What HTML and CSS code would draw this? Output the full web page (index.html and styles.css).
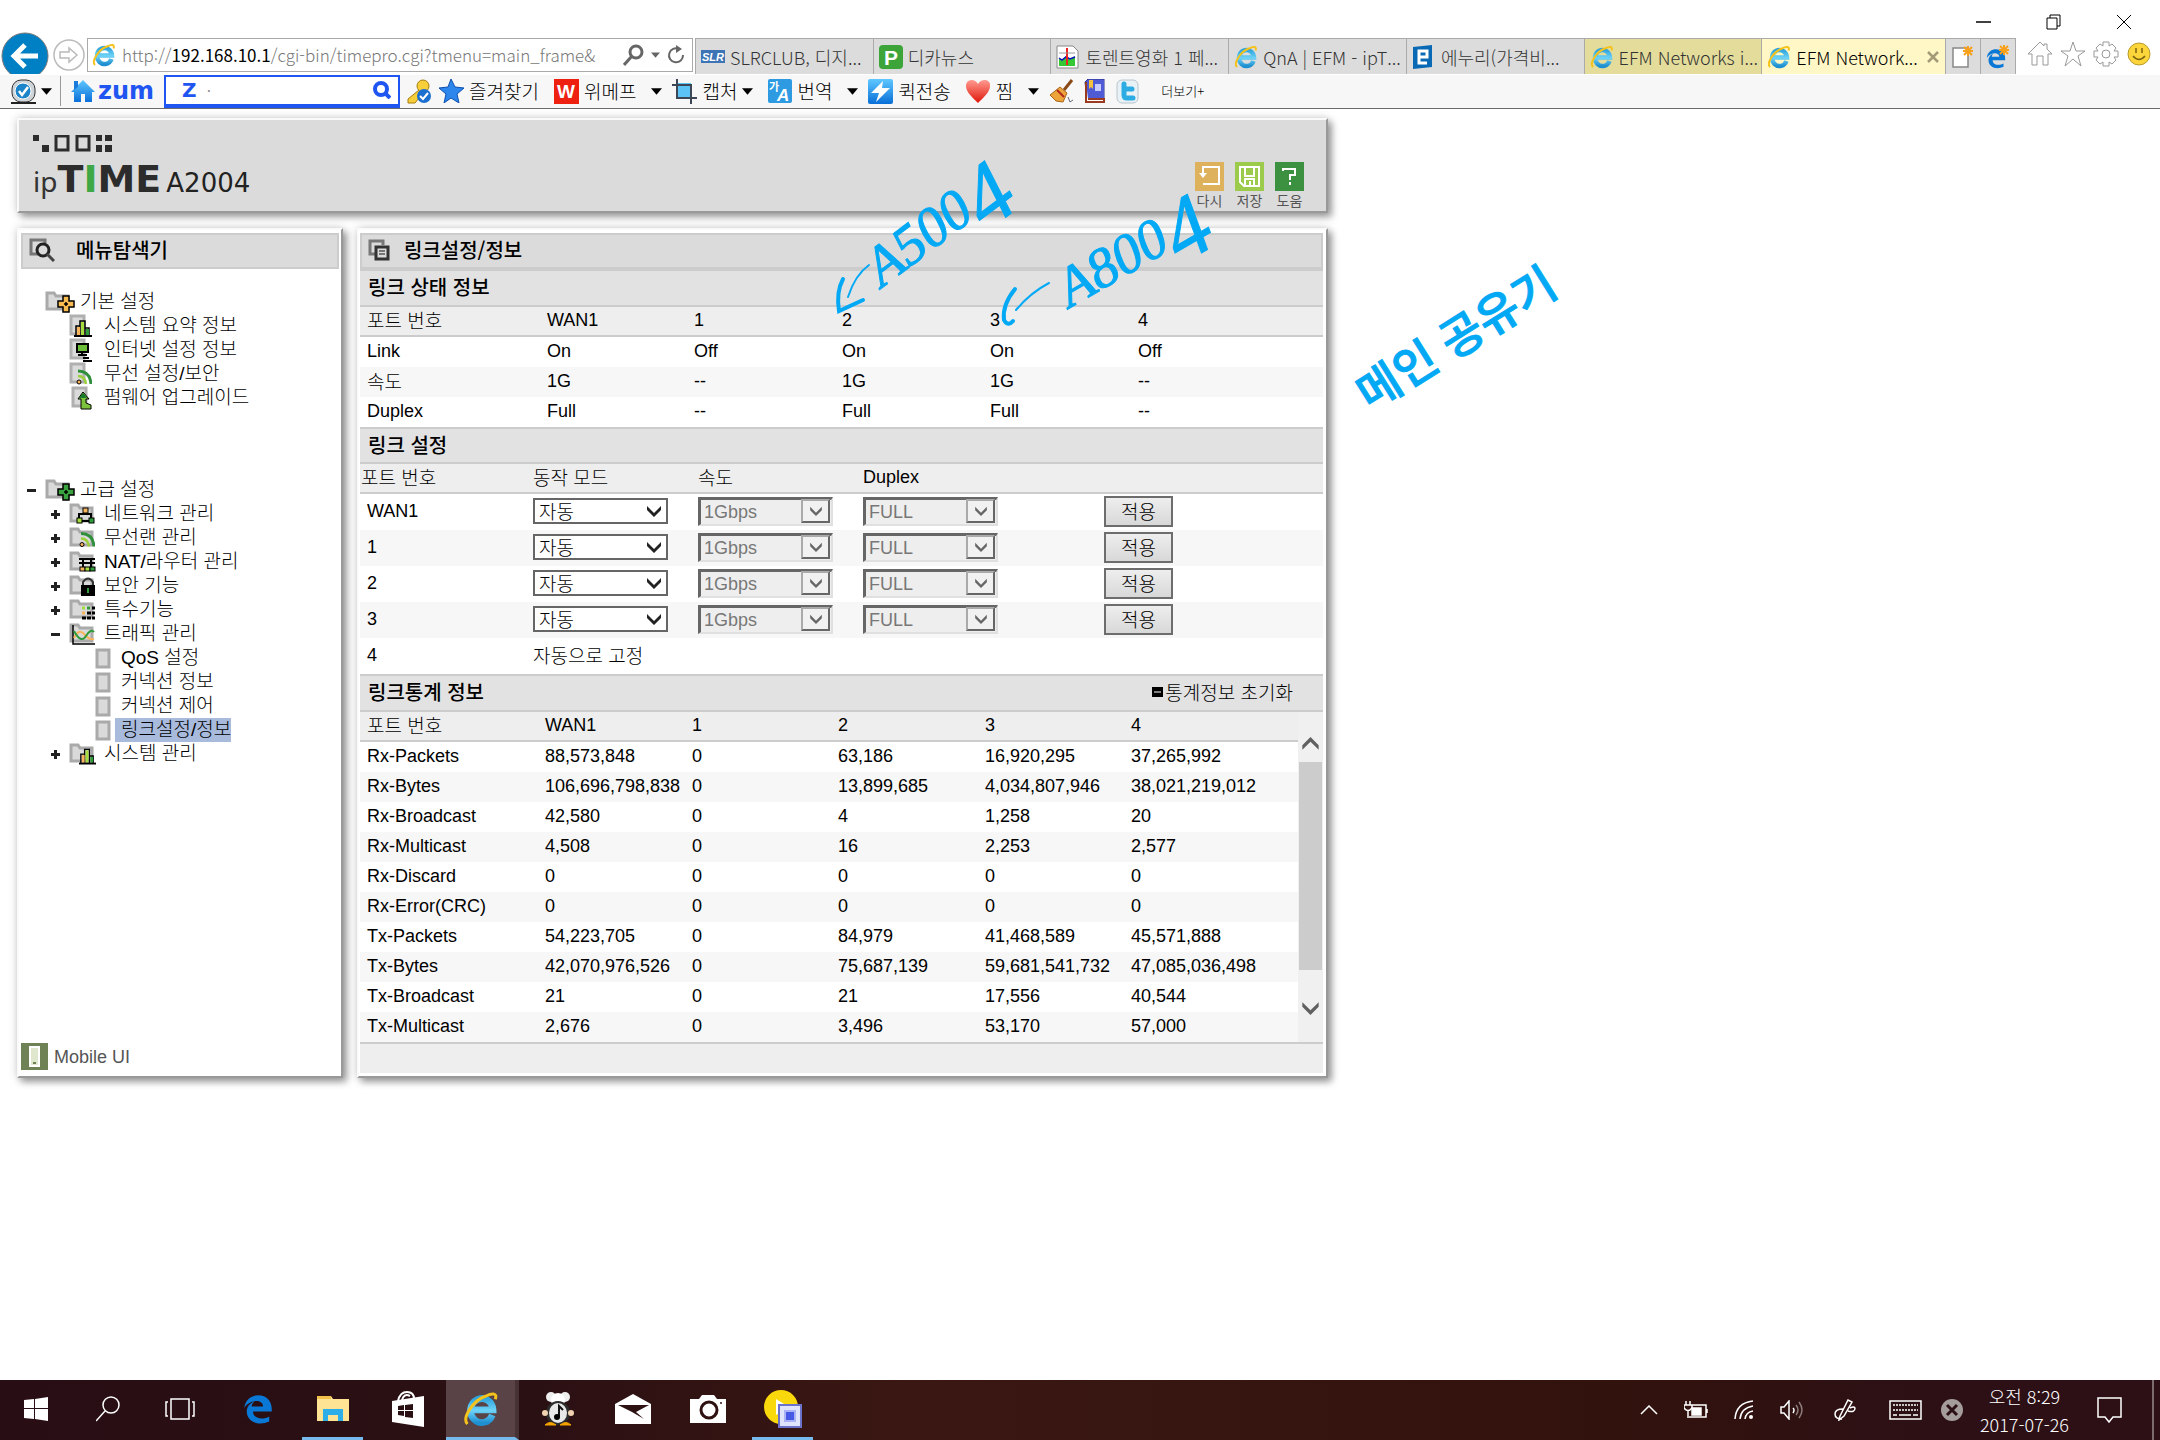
FILE: index.html
```html
<!DOCTYPE html>
<html lang="ko">
<head>
<meta charset="utf-8">
<title>EFM Networks ipTIME A2004</title>
<link rel="stylesheet" href="styles.css">
</head>
<body>
<svg class="defs" width="0" height="0" aria-hidden="true">
  <defs>
    <linearGradient id="g-ie" x1="0" y1="0" x2="0" y2="1"><stop offset="0" stop-color="#2fa4dd"/><stop offset=".5" stop-color="#6fd3f7"/><stop offset="1" stop-color="#1e8fd0"/></linearGradient>
    <linearGradient id="g-blue" x1="0" y1="0" x2="0" y2="1"><stop offset="0" stop-color="#5fc8ff"/><stop offset="1" stop-color="#0a6fd8"/></linearGradient>
    <linearGradient id="g-red" x1="0" y1="0" x2="0" y2="1"><stop offset="0" stop-color="#ff9a90"/><stop offset="1" stop-color="#e01508"/></linearGradient>
    <symbol id="ie" viewBox="0 0 24 24"><path d="M19.500 16A7.500 8 0 1 1 20 12.500H6.500" fill="none" stroke="url(#g-ie)" stroke-width="4.500"/><path d="M3 22C-1 18 7 6 15 3.500C20 1 23 1.500 21.500 5.500" fill="none" stroke="#f5c21b" stroke-width="2"/></symbol>
    <symbol id="edge" viewBox="0 0 24 24"><path d="M1 11C2 4 7 1 12 1C19 1 23 6 23 12V14H8C8 20 16 21 21 18V22C12 26 3 22 3 14C3 10 6 7 9 6C7 8 7 9 7 10H16C16 4 6 4 1 11Z" fill="#0a78d6"/></symbol>
    <symbol id="caret" viewBox="0 0 12 7"><path d="M0 0H12L6 7Z"/></symbol>
    <symbol id="chev" viewBox="0 0 16 12"><path d="M1 1L8 8L15 1V5L8 12L1 5Z"/></symbol>
    <symbol id="plus" viewBox="0 0 9 9"><path d="M0 3H3V0H6V3H9V6H6V9H3V6H0Z" fill="#222"/></symbol>
    <symbol id="minus" viewBox="0 0 9 9"><path d="M0 3H9V6H0Z" fill="#222"/></symbol>
    <symbol id="folder" viewBox="0 0 28 22"><path d="M2 18V2H9L11 5H23V18Z" fill="#dadada" stroke="#aaa" stroke-width="3"/></symbol>
    <symbol id="sheet" viewBox="0 0 22 22"><path d="M2 2H15V20H2Z" fill="#dadada" stroke="#b0b0b0" stroke-width="3"/></symbol>
    <symbol id="leaf" viewBox="0 0 16 21"><path d="M2 2H14V19H2Z" fill="#dadada" stroke="#aaa" stroke-width="3"/></symbol>
    <symbol id="bars" viewBox="0 0 18 18"><path d="M2 17V7H6V17M6 17V2H11V17M11 17V9H15V17" stroke="#000" stroke-width="1.500" fill="none"/><path d="M3 8H6V16H3Z" fill="#f9b55e"/><path d="M7 3H10V16H7Z" fill="#a5dc3e"/><path d="M12 10H15V16H12Z" fill="#2f9b3b"/><path d="M0 17H18" stroke="#000" stroke-width="2"/></symbol>
    <symbol id="waves" viewBox="0 0 16 16"><path d="M2 2Q14 2 15 15" stroke="#2f8f3b" stroke-width="3" fill="none"/><path d="M2 7Q9 7 10 15" stroke="#9dd13c" stroke-width="2.500" fill="none"/><circle cx="3" cy="13" r="2" fill="#f9b55e" stroke="#000"/></symbol>
    <symbol id="cross" viewBox="0 0 18 18"><path d="M6 1H12V6H17V12H12V17H6V12H1V6H6Z" stroke="#000" stroke-width="1.500"/><path d="M9 7V11M7 9H11" stroke="#000" stroke-width="1.500"/></symbol>
  </defs>
</svg>

<header class="chrome">
  <div class="window-bar">
    <button aria-label="최소화"><svg width="16" height="16"><path d="M0 8H15" stroke="#000" stroke-width="1.500"/></svg></button>
    <button aria-label="복원"><svg width="16" height="16" fill="none" stroke="#000"><path d="M1 4H11V15H1ZM4 4V1H14V12H11"/></svg></button>
    <button aria-label="닫기"><svg width="16" height="16" stroke="#000"><path d="M1 1L15 15M15 1L1 15"/></svg></button>
  </div>

  <div class="nav-bar">
    <button class="back" aria-label="뒤로"><svg width="48" height="42" viewBox="0 0 48 42"><circle cx="24" cy="24" r="23" fill="#0080c4" stroke="#777"/><path d="M37 24H14M24 13L13 24L24 35" fill="none" stroke="#fff" stroke-width="5"/></svg></button>
    <button class="forward" aria-label="앞으로"><svg width="34" height="34" viewBox="0 0 34 34" fill="none" stroke="#bbb" stroke-width="1.500"><circle cx="17" cy="17" r="15"/><path d="M8 14H17V10L25 17L17 24V20H8Z"/></svg></button>
    <div class="address">
      <svg width="24" height="24"><use href="#ie"/></svg>
      <a class="url" href="#">http://<b>192.168.10.1</b>/cgi-bin/timepro.cgi?tmenu=main_frame&amp;</a>
      <svg width="22" height="22" fill="none" stroke="#666" stroke-width="3"><circle cx="13" cy="8" r="6"/><path d="M9 12L1 21"/></svg>
      <svg width="9" height="6" fill="#666"><use href="#caret"/></svg>
      <svg width="20" height="20" fill="none" stroke="#666" stroke-width="2"><path d="M13 4A7 7 0 1 0 17 10"/><path d="M10 0L16 4L10 8Z" fill="#666" stroke="none"/></svg>
    </div>
    <nav class="tabs">
      <a class="tab" href="#"><svg width="24" height="24"><rect y="5" width="24" height="13" fill="#3d74b5"/><text x="1" y="16" class="ico slr">SLR</text></svg><span>SLRCLUB, 디지...</span></a>
      <a class="tab" href="#"><svg width="24" height="24"><rect width="24" height="24" rx="4" fill="#3da43a"/><text x="5" y="20" class="ico p">P</text></svg><span>디카뉴스</span></a>
      <a class="tab" href="#"><svg width="24" height="24"><path d="M1 1H17L22 6V23H1Z" fill="#fff" stroke="#888"/><path d="M3 21V13L6 15L10 11L14 14L19 11V21Z" fill="#34c934"/><path d="M3 13L6 15L10 12L14 14L19 12" stroke="#11b" stroke-width="1.500" fill="none"/><path d="M11 3V20" stroke="#e22" stroke-width="2"/><path d="M3 8H19" stroke="#999"/></svg><span>토렌트영화 1 페...</span></a>
      <a class="tab" href="#"><svg width="24" height="24"><use href="#ie"/></svg><span>QnA | EFM - ipT...</span></a>
      <a class="tab" href="#"><svg width="24" height="24"><path d="M1 2L20 0V22L1 24Z" fill="#0a69b4"/><path d="M7 12H15V6H7V18H15" fill="none" stroke="#fff" stroke-width="3"/></svg><span>에누리(가격비...</span></a>
      <a class="tab olive" href="#"><svg width="24" height="24"><use href="#ie"/></svg><span>EFM Networks i...</span></a>
      <a class="tab current" href="#"><svg width="24" height="24"><use href="#ie"/></svg><span>EFM Network...</span><svg class="x" width="12" height="12"><path d="M1 1L11 11M11 1L1 11" stroke="#a39b78" stroke-width="2.500"/></svg></a>
      <button class="tab mini" aria-label="새 탭"><svg width="22" height="24"><path d="M1 3H16V22H1Z" fill="#fff" stroke="#888" stroke-width="1.500"/><path d="M16 1V11M11 6H21M12 2L20 10M20 2L12 10" stroke="#f7a01b" stroke-width="2"/></svg></button>
      <button class="tab mini" aria-label="Edge로 열기"><svg width="24" height="24"><svg y="3" width="20" height="21"><use href="#edge"/></svg><path d="M18 0V10M13 5H23M14 1L22 9M22 1L14 9" stroke="#f7a01b" stroke-width="2"/></svg></button>
    </nav>
    <div class="tools">
      <button aria-label="홈"><svg width="26" height="26"><path d="M1 13L13 1L17 5V3H20V8L25 13H21V24H16V15H10V24H5V13Z"/></svg></button>
      <button aria-label="즐겨찾기"><svg width="26" height="26"><path d="M13 1L16 10H25L18 15L21 25L13 18L5 25L8 15L1 10H10Z"/></svg></button>
      <button aria-label="도구"><svg width="26" height="26"><circle cx="13" cy="13" r="4"/><path d="M10 1H16V5L19 3L23 7L21 10H25V16H21L23 19L19 23L16 21V25H10V21L7 23L3 19L5 16H1V10H5L3 7L7 3L10 5Z"/></svg></button>
      <button aria-label="의견"><svg width="26" height="26"><circle class="face" cx="13" cy="13" r="11"/><path d="M10 7V12M16 7V12M7 15Q13 22 19 15" stroke="#7b6210" stroke-width="1.500"/></svg></button>
    </div>
  </div>

  <div class="toolbar">
    <button aria-label="알툴바"><svg width="25" height="25"><rect x="1" y="1" width="23" height="22" rx="9" fill="#cfd4d8" stroke="#333"/><path d="M0 24H25" stroke="#222" stroke-width="2"/><circle cx="12" cy="12" r="8" fill="#1c84c9" stroke="#fff"/><path d="M8 12L11 16L17 8" fill="none" stroke="#fff" stroke-width="2.500"/></svg><svg width="11" height="7"><use href="#caret"/></svg></button>
    <a class="zum" href="#"><svg width="24" height="24"><path d="M0 13L12 1L24 13H21V23H14V15H10V23H3V13Z" fill="url(#g-blue)"/><path d="M3 2H7V8L3 11Z" fill="#1a7cd8"/></svg><b>zum</b></a>
    <label class="search"><b>Z</b><input type="text" aria-label="검색" value="·"><svg width="18" height="18" fill="none" stroke="#1f55f0" stroke-width="4"><circle cx="8" cy="8" r="6"/><path d="M12 12L17 17"/></svg></label>
    <button class="close" aria-label="비밀번호"><svg width="25" height="25"><circle cx="16" cy="7" r="6" fill="#f6cf3b" stroke="#a67c0c"/><path d="M12 11L1 20V24H8L16 14" fill="#f6cf3b" stroke="#a67c0c"/><circle cx="17" cy="17" r="7" fill="#1b6fd0"/><path d="M13 17L16 20L21 14" fill="none" stroke="#fff" stroke-width="2"/></svg></button>
    <button class="wide"><svg width="25" height="24"><path d="M12 0L16 8L25 9L18 15L20 24L12 19L5 24L7 15L0 9L9 8Z" fill="#2d86ec" stroke="#0c4fae"/></svg><span>즐겨찾기</span></button>
    <button class="wide"><svg width="25" height="25"><rect width="25" height="25" fill="#ee2010"/><text x="3" y="19" class="ico w">W</text></svg><span>위메프</span></button>
    <button aria-label="위메프 메뉴"><svg width="11" height="7"><use href="#caret"/></svg></button>
    <button class="wide"><svg width="25" height="25"><rect x="4" y="4" width="15" height="15" fill="#5bc3f5"/><path d="M5 0V19H25M0 6H19V25" fill="none" stroke="#3c4654" stroke-width="2"/></svg><span>캡처</span><svg width="11" height="7"><use href="#caret"/></svg></button>
    <button class="wide"><svg width="24" height="25"><rect width="24" height="24" rx="2" fill="#2e9ae2"/><text x="1" y="12" class="ico ga">가</text><text x="9" y="22" class="ico a">A</text></svg><span>번역</span></button>
    <button aria-label="번역 메뉴"><svg width="11" height="7"><use href="#caret"/></svg></button>
    <button class="wide"><svg width="25" height="25"><rect width="25" height="25" rx="2" fill="url(#g-blue)"/><path d="M15 2L3 14H11L8 23L22 9H14Z" fill="#fff"/></svg><span>퀵전송</span></button>
    <button class="wide"><svg width="25" height="25"><path d="M12 24C6 18 0 13 0 7C0 0 9 -1 12 5C15 -1 25 0 24 7C24 13 18 18 12 24Z" fill="url(#g-red)"/></svg><span>찜</span></button>
    <button aria-label="찜 메뉴"><svg width="11" height="7"><use href="#caret"/></svg></button>
    <button aria-label="청소"><svg width="25" height="25"><path d="M23 1L15 11" stroke="#8a4a17" stroke-width="3"/><path d="M11 8L18 14L14 23L7 22L1 16Z" fill="#eda53b" stroke="#a8651a"/><path d="M8 11L15 18" stroke="#b3281c" stroke-width="2"/><path d="M19 18L21 23L24 21" stroke="#667" fill="none"/></svg></button>
    <button aria-label="사전"><svg width="22" height="25"><path d="M1 3L4 0H20V20H3Z" fill="#4f5bd5" stroke="#2b338f"/><path d="M2 3V23H20V20H4" fill="#fff" stroke="#9a3b20" stroke-width="2"/><path d="M4 1H20V19H4Z" fill="#4f5bd5"/><path d="M5 1V10L7 8L9 10V1Z" fill="#f4c23c"/><path d="M11 5H17V12H11Z" fill="#c6ccff"/></svg></button>
    <button aria-label="트위터"><svg width="23" height="25"><rect x="1" y="1" width="21" height="23" rx="5" fill="#e8f1f6" stroke="#b9c4cc"/><path d="M8 5V16Q8 19 11 19H17M8 10H16" fill="none" stroke="#2cace3" stroke-width="5" stroke-linecap="round"/></svg></button>
    <button class="more">더보기+</button>
  </div>
</header>

<main class="page">
  <div class="frame">
    <header class="panel masthead">
      <div class="brand">
        <svg width="80" height="17" fill="#2c2c2c"><path d="M0 0H6V6H0ZM9 10H16V17H9ZM63 0H69V6H63ZM72 0H79V6H72ZM63 10H69V17H63ZM72 10H79V17H72Z"/><path d="M23 1H35V15H23ZM44 1H56V15H44Z" fill="none" stroke="#2c2c2c" stroke-width="3"/></svg>
        <h1><span class="ip">ip</span><b>T<i>I</i>ME</b><span class="model">A2004</span></h1>
      </div>
      <div class="actions">
        <button><svg width="29" height="29" fill="none" stroke="#fff" stroke-width="2"><rect width="29" height="29" fill="#deb15c" stroke="none"/><path d="M8 14V5H24V22H8"/><path d="M4 11H12L8 16Z" fill="#fff" stroke="none"/></svg>다시</button>
        <button><svg width="29" height="29" fill="none" stroke="#fff" stroke-width="2"><rect width="29" height="29" fill="#9ccb4b" stroke="none"/><path d="M5 5H24V24H9L5 20ZM10 5V14H19V5M10 24V17H19V24M15 19V24"/></svg>저장</button>
        <button><svg width="29" height="29" fill="none" stroke="#fff" stroke-width="2"><rect width="29" height="29" fill="#3c9141" stroke="none"/><path d="M8 9V7H20V13H15V18M15 20V23"/></svg>도움</button>
      </div>
    </header>

    <aside class="panel sidebar">
      <h2 class="bar"><svg width="26" height="24" fill="none" stroke="#777" stroke-width="3"><path d="M9 16H2V2H16V5"/><circle cx="14" cy="12" r="6" stroke="#222"/><path d="M18 16L25 23" stroke="#444"/></svg>메뉴탐색기</h2>
      <ul class="tree">
        <li class="l1"><span></span><svg width="30" height="24"><svg y="1" width="28" height="22"><use href="#folder"/></svg><svg x="12" y="5" width="18" height="18" fill="#f9bc50"><use href="#cross"/></svg></svg><a href="#">기본 설정</a></li>
        <li class="l2"><span></span><svg width="27" height="24"><svg width="22" height="22"><use href="#sheet"/></svg><svg x="5" y="5" width="18" height="18"><use href="#bars"/></svg></svg><a href="#">시스템 요약 정보</a></li>
        <li class="l2"><span></span><svg width="27" height="24"><svg width="22" height="22"><use href="#sheet"/></svg><path d="M8 6H19V14H8Z" fill="#6cbd3a" stroke="#000" stroke-width="2"/><path d="M13 14V18M9 17H18M14 20H20M14 23H23" stroke="#000" stroke-width="2"/></svg><a href="#">인터넷 설정 정보</a></li>
        <li class="l2"><span></span><svg width="27" height="24"><svg width="22" height="22"><use href="#sheet"/></svg><svg x="7" y="7" width="16" height="16"><use href="#waves"/></svg></svg><a href="#">무선 설정/보안</a></li>
        <li class="l2"><span></span><svg width="27" height="24"><svg x="2" width="22" height="22"><use href="#sheet"/></svg><path d="M14 6L20 13H17V17L22 19V23H12V13H9Z" fill="#7cc23c" stroke="#000"/><path d="M14 7L18 12H10Z" fill="#187b2b"/></svg><a href="#">펌웨어 업그레이드</a></li>
      </ul>
      <ul class="tree advanced">
        <li class="l1"><svg width="9" height="9"><use href="#minus"/></svg><svg width="30" height="24"><svg y="1" width="28" height="22"><use href="#folder"/></svg><svg x="12" y="5" width="18" height="18" fill="#3aa23f"><use href="#cross"/></svg></svg><a href="#">고급 설정</a></li>
        <li class="l2"><svg width="9" height="9"><use href="#plus"/></svg><svg width="27" height="24"><svg y="1" width="28" height="22"><use href="#folder"/></svg><path d="M10 19V12H22V19M10 19H22" fill="none" stroke="#000" stroke-width="2"/><g stroke="#000"><rect x="14" y="6" width="5" height="5" fill="#f9b55e"/><rect x="8" y="16" width="5" height="5" fill="#a5dc3e"/><rect x="20" y="16" width="5" height="5" fill="#2f9b3b"/></g></svg><a href="#">네트워크 관리</a></li>
        <li class="l2"><svg width="9" height="9"><use href="#plus"/></svg><svg width="27" height="24"><svg y="1" width="28" height="22"><use href="#folder"/></svg><svg x="10" y="5" width="16" height="17"><use href="#waves"/></svg></svg><a href="#">무선랜 관리</a></li>
        <li class="l2"><svg width="9" height="9"><use href="#plus"/></svg><svg width="27" height="24"><svg y="1" width="28" height="22"><use href="#folder"/></svg><path d="M10 9H26M10 13H26M14 9V18M22 9V18" stroke="#000" stroke-width="2"/><g stroke="#000"><rect x="11" y="17" width="5" height="4" fill="#f9b55e"/><rect x="16" y="17" width="5" height="4" fill="#a5dc3e"/><rect x="21" y="17" width="5" height="4" fill="#2f9b3b"/></g></svg><a href="#">NAT/라우터 관리</a></li>
        <li class="l2"><svg width="9" height="9"><use href="#plus"/></svg><svg width="27" height="24"><svg y="1" width="28" height="22"><use href="#folder"/></svg><path d="M14 12V8Q19 1 24 8V12" fill="none" stroke="#333" stroke-width="2"/><rect x="12" y="11" width="14" height="11"/><path d="M19 14V19" stroke="#2f9b3b" stroke-width="2"/></svg><a href="#">보안 기능</a></li>
        <li class="l2"><svg width="9" height="9"><use href="#plus"/></svg><svg width="27" height="24"><svg y="1" width="28" height="22"><use href="#folder"/></svg><path d="M18 15H26M13 20H26" stroke="#000" stroke-width="3" stroke-dasharray="4 1"/><path d="M13 10H16" stroke="#a5dc3e" stroke-width="3"/><path d="M18 10H21" stroke="#2f9b3b" stroke-width="3"/><path d="M13 15H16" stroke="#f9b55e" stroke-width="3"/><path d="M23 10H26" stroke="#000" stroke-width="3"/></svg><a href="#">특수기능</a></li>
        <li class="l2"><svg width="9" height="9"><use href="#minus"/></svg><svg width="27" height="24"><svg y="1" width="28" height="22"><use href="#folder"/></svg><path d="M4 3V22H26" fill="none" stroke="#000" stroke-width="1.500"/><path d="M5 16Q10 6 15 12T25 17" fill="none" stroke="#f9b55e" stroke-width="2"/><path d="M5 9Q12 22 17 14T25 10" fill="none" stroke="#2f9b3b" stroke-width="2"/></svg><a href="#">트래픽 관리</a></li>
        <li class="l3"><span></span><svg width="16" height="21"><use href="#leaf"/></svg><a href="#">QoS 설정</a></li>
        <li class="l3"><span></span><svg width="16" height="21"><use href="#leaf"/></svg><a href="#">커넥션 정보</a></li>
        <li class="l3"><span></span><svg width="16" height="21"><use href="#leaf"/></svg><a href="#">커넥션 제어</a></li>
        <li class="l3"><span></span><svg width="16" height="21"><use href="#leaf"/></svg><a class="selected" href="#">링크설정/정보</a></li>
        <li class="l2"><svg width="9" height="9"><use href="#plus"/></svg><svg width="27" height="24"><svg y="1" width="28" height="22"><use href="#folder"/></svg><svg x="10" y="5" width="17" height="18"><use href="#bars"/></svg></svg><a href="#">시스템 관리</a></li>
      </ul>
      <a class="mobile" href="#"><svg width="27" height="27"><rect width="27" height="27" fill="#6f8256"/><path d="M9 4H18V23H9Z" fill="#dfe8cf" stroke="#fff" stroke-width="2"/><path d="M12 20H15" stroke="#6f8256" stroke-width="2"/></svg>Mobile UI</a>
    </aside>

    <section class="panel content">
      <h2 class="bar"><svg width="22" height="22" fill="none" stroke="#777" stroke-width="3"><path d="M7 15H2V2H15V6"/><path d="M8 8H20V20H8Z" stroke="#333"/><path d="M11 12H17M11 15H17" stroke="#555" stroke-width="1.500"/></svg>링크설정/정보</h2>

      <h3>링크 상태 정보</h3>
      <table class="status">
        <colgroup><col class="c187"><col class="c147"><col class="c148"><col class="c148"><col class="c148"><col></colgroup>
        <thead><tr><th class="ko">포트 번호</th><th>WAN1</th><th>1</th><th>2</th><th>3</th><th>4</th></tr></thead>
        <tbody>
          <tr><td>Link</td><td>On</td><td>Off</td><td>On</td><td>On</td><td>Off</td></tr>
          <tr><td class="ko">속도</td><td>1G</td><td>--</td><td>1G</td><td>1G</td><td>--</td></tr>
          <tr><td>Duplex</td><td>Full</td><td>--</td><td>Full</td><td>Full</td><td>--</td></tr>
        </tbody>
      </table>

      <h3>링크 설정</h3>
      <table class="setup">
        <colgroup><col class="c173"><col class="c165"><col class="c165"><col class="c241"><col></colgroup>
        <thead><tr><th class="ko">포트 번호</th><th class="ko">동작 모드</th><th class="ko">속도</th><th>Duplex</th><th></th></tr></thead>
        <tbody>
          <tr><td>WAN1</td>
            <td><span class="pick"><select aria-label="WAN1 동작 모드"><option>자동</option></select><svg width="16" height="12"><use href="#chev"/></svg></span></td>
            <td><span class="pick off"><select aria-label="WAN1 속도" disabled><option>1Gbps</option></select><i><svg width="14" height="10"><use href="#chev"/></svg></i></span></td>
            <td><span class="pick off"><select aria-label="WAN1 Duplex" disabled><option>FULL</option></select><i><svg width="14" height="10"><use href="#chev"/></svg></i></span></td>
            <td><button class="apply">적용</button></td></tr>
          <tr><td>1</td>
            <td><span class="pick"><select aria-label="1 동작 모드"><option>자동</option></select><svg width="16" height="12"><use href="#chev"/></svg></span></td>
            <td><span class="pick off"><select aria-label="1 속도" disabled><option>1Gbps</option></select><i><svg width="14" height="10"><use href="#chev"/></svg></i></span></td>
            <td><span class="pick off"><select aria-label="1 Duplex" disabled><option>FULL</option></select><i><svg width="14" height="10"><use href="#chev"/></svg></i></span></td>
            <td><button class="apply">적용</button></td></tr>
          <tr><td>2</td>
            <td><span class="pick"><select aria-label="2 동작 모드"><option>자동</option></select><svg width="16" height="12"><use href="#chev"/></svg></span></td>
            <td><span class="pick off"><select aria-label="2 속도" disabled><option>1Gbps</option></select><i><svg width="14" height="10"><use href="#chev"/></svg></i></span></td>
            <td><span class="pick off"><select aria-label="2 Duplex" disabled><option>FULL</option></select><i><svg width="14" height="10"><use href="#chev"/></svg></i></span></td>
            <td><button class="apply">적용</button></td></tr>
          <tr><td>3</td>
            <td><span class="pick"><select aria-label="3 동작 모드"><option>자동</option></select><svg width="16" height="12"><use href="#chev"/></svg></span></td>
            <td><span class="pick off"><select aria-label="3 속도" disabled><option>1Gbps</option></select><i><svg width="14" height="10"><use href="#chev"/></svg></i></span></td>
            <td><span class="pick off"><select aria-label="3 Duplex" disabled><option>FULL</option></select><i><svg width="14" height="10"><use href="#chev"/></svg></i></span></td>
            <td><button class="apply">적용</button></td></tr>
          <tr><td>4</td><td class="ko" colspan="4">자동으로 고정</td></tr>
        </tbody>
      </table>

      <h3>링크통계 정보 <a class="reset" href="#"><svg width="11" height="10"><rect width="11" height="10"/><path d="M2 5H9" stroke="#fff"/></svg>통계정보 초기화</a></h3>
      <div class="stats">
        <table>
          <colgroup><col class="c185"><col class="c147"><col class="c146"><col class="c147"><col class="c146"><col></colgroup>
          <thead><tr><th class="ko">포트 번호</th><th>WAN1</th><th>1</th><th>2</th><th>3</th><th>4</th></tr></thead>
          <tbody>
            <tr><td>Rx-Packets</td><td>88,573,848</td><td>0</td><td>63,186</td><td>16,920,295</td><td>37,265,992</td></tr>
            <tr><td>Rx-Bytes</td><td>106,696,798,838</td><td>0</td><td>13,899,685</td><td>4,034,807,946</td><td>38,021,219,012</td></tr>
            <tr><td>Rx-Broadcast</td><td>42,580</td><td>0</td><td>4</td><td>1,258</td><td>20</td></tr>
            <tr><td>Rx-Multicast</td><td>4,508</td><td>0</td><td>16</td><td>2,253</td><td>2,577</td></tr>
            <tr><td>Rx-Discard</td><td>0</td><td>0</td><td>0</td><td>0</td><td>0</td></tr>
            <tr><td>Rx-Error(CRC)</td><td>0</td><td>0</td><td>0</td><td>0</td><td>0</td></tr>
            <tr><td>Tx-Packets</td><td>54,223,705</td><td>0</td><td>84,979</td><td>41,468,589</td><td>45,571,888</td></tr>
            <tr><td>Tx-Bytes</td><td>42,070,976,526</td><td>0</td><td>75,687,139</td><td>59,681,541,732</td><td>47,085,036,498</td></tr>
            <tr><td>Tx-Broadcast</td><td>21</td><td>0</td><td>21</td><td>17,556</td><td>40,544</td></tr>
            <tr><td>Tx-Multicast</td><td>2,676</td><td>0</td><td>3,496</td><td>53,170</td><td>57,000</td></tr>
          </tbody>
        </table>
        <div class="scroll">
          <button class="up" aria-label="위로"><svg width="19" height="14"><use href="#chev"/></svg></button>
          <div class="thumb"></div>
          <button aria-label="아래로"><svg width="19" height="14"><use href="#chev"/></svg></button>
        </div>
      </div>
      <footer class="foot"></footer>
    </section>
  </div>
</main>

<!-- pen notes written over the window -->
<svg class="ink" width="1600" height="440" viewBox="0 0 1600 440">
  <g fill="none" stroke="#03a9f4" stroke-linecap="round">
    <path d="M843 279Q836 292 839 311L863 300" stroke-width="4"/><path d="M869 265Q855 275 848 297" stroke-width="2"/>
    <path d="M1015 289Q1002 305 1004 320Q1008 327 1013 321" stroke-width="4"/><path d="M1049 283Q1030 293 1016 310" stroke-width="2"/>
  </g>
  <text class="note" transform="translate(882 288) rotate(-37)">A500<tspan class="tall" dy="18">4</tspan></text>
  <text class="note" transform="translate(1070 308) rotate(-30)">A800<tspan class="tall" dy="18">4</tspan></text>
  <text class="note hangul" transform="translate(1370 412) rotate(-32)">메인 공유기</text>
</svg>

<footer class="taskbar">
  <div class="apps">
    <button class="sys" aria-label="시작"><svg width="24" height="24" fill="#fff"><path d="M0 3L10 2V11H0ZM11 2L24 0V11H11ZM0 12H10V22L0 21ZM11 12H24V24L11 22Z"/></svg></button>
    <button class="sys" aria-label="검색"><svg width="24" height="26" fill="none" stroke="#fff" stroke-width="1.500"><circle cx="15" cy="9" r="8"/><path d="M9 15L0 25"/></svg></button>
    <button class="sys" aria-label="작업 보기"><svg width="30" height="22" fill="none" stroke="#fff" stroke-width="1.500"><path d="M6 1H24V21H6ZM3 4H1V18H3M27 4H29V18H27"/></svg></button>
    <button aria-label="Edge"><svg width="30" height="32"><use href="#edge"/></svg></button>
    <button class="open" aria-label="파일 탐색기"><svg width="32" height="27"><path d="M0 1H14L16 4H32V26H0Z" fill="#ffe394"/><path d="M0 1H14V4H0Z" fill="#f2c14c"/><path d="M6 26V14H26V26H21V20H11V26Z" fill="#2eaee8"/></svg></button>
    <button aria-label="스토어"><svg width="32" height="36" fill="#fff"><path d="M0 10L32 5V36L0 31Z"/><path d="M6 10Q8 1 15 1T22 8M10 9Q12 2 18 5" fill="none" stroke="#fff" stroke-width="2"/><path d="M6 15L12 14V19H6ZM13 14L21 13V19H13ZM6 20H12V25L6 24ZM13 20H21V27L13 26Z" fill="#2b1013"/></svg></button>
    <button class="open active" aria-label="Internet Explorer"><svg width="36" height="36"><use href="#ie"/></svg></button>
    <button aria-label="음악"><svg width="32" height="34"><circle cx="9" cy="5" r="5" fill="#eee"/><circle cx="23" cy="5" r="5" fill="#eee"/><circle cx="16" cy="8" r="7" fill="#fff"/><ellipse cx="16" cy="21" rx="12" ry="12" fill="#2b2b2b"/><ellipse cx="16" cy="21" rx="9" ry="10" fill="#e8e8e8"/><path d="M17 25V14L21 18" fill="none" stroke="#111" stroke-width="2"/><circle cx="15" cy="25" r="3"/><circle cx="3" cy="21" r="3" fill="#f1d2b0"/><circle cx="29" cy="21" r="3" fill="#f1d2b0"/><path d="M3 33Q8 28 14 33ZM18 33Q24 28 29 33Z" fill="#f5a300" stroke="#f5a300"/></svg></button>
    <button aria-label="메일"><svg width="36" height="30" fill="#fff"><path d="M0 10L18 0L36 10V30H0Z"/><path d="M3 11H34L21 18L29 25L17 18Z" fill="#2e1112"/></svg></button>
    <button aria-label="카메라"><svg width="36" height="28"><path d="M0 4H9L12 0H24L27 4H36V28H0Z" fill="#fff"/><circle cx="19" cy="15" r="8" fill="#fff" stroke="#2f1111" stroke-width="3"/><circle cx="31" cy="8" r="1" fill="#2f1111"/></svg></button>
    <button class="open" aria-label="플레이어"><svg width="38" height="38"><circle cx="17" cy="17" r="17" fill="#f9d80c"/><path d="M12 9L25 17L12 25Z" fill="#fff"/><rect x="15" y="15" width="22" height="22" fill="#dfe3fb" stroke="#6b72c9" stroke-width="2"/><rect x="21" y="21" width="10" height="10" fill="#4757e6" stroke="#aab2f5" stroke-width="2"/></svg></button>
  </div>
  <div class="tray">
    <button aria-label="숨겨진 아이콘"><svg width="18" height="10" fill="none" stroke="#fff" stroke-width="1.500"><path d="M1 9L9 1L17 9"/></svg></button>
    <button aria-label="배터리"><svg width="24" height="18" fill="none" stroke="#fff" stroke-width="1.500"><path d="M8 4H22V16H5M23 8V12M2 0V4M6 0V4M0 4H8V7Q4 12 0 7ZM4 10V17"/><rect x="8" y="7" width="9" height="7" fill="#fff"/></svg></button>
    <button aria-label="네트워크"><svg width="20" height="20" fill="none" stroke="#fff" stroke-width="1.500"><path d="M1 19Q2 3 19 1M6 19Q7 8 19 6M11 19Q12 12 19 11"/><circle cx="17" cy="17" r="2" fill="#fff" stroke="none"/></svg></button>
    <button aria-label="볼륨"><svg width="24" height="20" fill="none" stroke="#fff" stroke-width="1.500"><path d="M1 7H4L9 1V19L4 13H1ZM13 8Q15 10 13 13"/><path d="M16 5Q20 10 16 15M19 2Q25 10 19 18" stroke="#8d7b7b"/></svg></button>
    <button class="pen" aria-label="펜"><svg width="22" height="22" fill="none" stroke="#fff" stroke-width="1.500"><path d="M6 17L14 1L18 3L10 17L5 21ZM9 10Q1 10 1 15T8 20M14 12Q21 14 21 9Q20 7 16 9"/></svg></button>
    <button class="keys" aria-label="키보드"><svg width="33" height="20" fill="none" stroke="#fff" stroke-width="1.500"><rect x="1" y="1" width="31" height="18"/><path d="M4 5H29M4 10H29" stroke-dasharray="2 1"/><path d="M4 15H8M10 15H22M24 15H29"/></svg></button>
    <button aria-label="한/영"><svg width="23" height="23"><circle cx="11" cy="11" r="11" fill="#a59c9c"/><path d="M6 6L16 16M16 6L6 16" stroke="#2b1114" stroke-width="3"/></svg></button>
    <time class="clock" datetime="2017-07-26T08:29">오전 8:29<br>2017-07-26</time>
    <button aria-label="알림"><svg width="25" height="26" fill="none" stroke="#fff" stroke-width="1.500"><path d="M1 1H24V20H16L12 25L8 20H1Z"/></svg></button>
    <button class="desktop" aria-label="바탕 화면 보기"></button>
  </div>
</footer>
</body>
</html>
```

FILE: styles.css
```css
* { box-sizing: border-box; }

body {
  margin: 0;
  min-height: 100vh;
  display: flex;
  flex-direction: column;
  background: #fff;
  color: #000;
  font: 18px/24px "Liberation Sans", "Noto Sans CJK KR", sans-serif;
}

a { color: inherit; text-decoration: none; }
svg { display: block; flex: none; }
.defs { position: absolute; }

button {
  padding: 0;
  border: 0;
  background: none;
  color: inherit;
  font: inherit;
  display: flex;
  align-items: center;
  justify-content: center;
}

/* ---------- browser chrome ---------- */
.chrome { font-family: "Noto Sans CJK KR", sans-serif; font-weight: 300; }

.window-bar {
  height: 32px;
  padding: 14px 28px 0 0;
  display: flex;
  justify-content: flex-end;
  align-items: flex-start;
  gap: 54px;
}

.nav-bar {
  height: 42px;
  padding-top: 6px;
  display: flex;
}
.back { align-self: flex-end; width: 50px; height: 42px; }
.forward { width: 37px; height: 34px; }

.address {
  flex: 0 1 606px;
  min-width: 0;
  height: 34px;
  padding: 0 6px 0 4px;
  border: 1px solid #aaa;
  display: flex;
  align-items: center;
  gap: 6px;
}
.url {
  flex: 1;
  white-space: nowrap;
  color: #777;
  font-size: 17px;
}
.url b { color: #000; font-weight: 400; }

.tabs {
  flex: 1;
  min-width: 0;
  margin-left: 2px;
  display: flex;
  border-right: 1px solid #aaa;
}
.tab {
  flex: 178 1 0;
  min-width: 0;
  height: 36px;
  padding-left: 5px;
  display: flex;
  align-items: center;
  gap: 5px;
  background: #dcdcdc;
  border-top: 1px solid #aaa;
  border-left: 1px solid #aaa;
  color: #333;
  white-space: nowrap;
}
.tab span { flex: 1; }
.tab.olive { background: #e3dc9b; }
.tab.current { background: #fff8c6; color: #000; padding-right: 6px; }
.tab.mini { flex: 0 0 35px; padding: 0; }

.tools { display: flex; gap: 7px; padding: 0 8px 4px 11px; }
.tools svg { fill: none; stroke: #999; stroke-width: 1; }
.tools .face { fill: #fcd53a; stroke: #b99a2c; }

.toolbar {
  height: 35px;
  padding: 0 11px 1px;
  display: flex;
  align-items: center;
  gap: 10px;
  background: #f7f7f7;
  border-top: 1px solid #fff;
  border-bottom: 1px solid #6b6b6b;
  font-size: 19px;
}
.toolbar button { gap: 5px; white-space: nowrap; }
.toolbar button:first-child { padding-right: 8px; border-right: 1px solid #999; height: 30px; }
.toolbar .wide { margin-right: 5px; }
.toolbar .close { margin: 0 -3px; }
.zum { display: flex; align-items: center; gap: 3px; color: #1f55f0; }
.zum b { font: 900 24px/24px "DejaVu Sans", sans-serif; }
.search {
  width: 236px;
  height: 33px;
  padding: 0 7px 0 16px;
  display: flex;
  align-items: center;
  gap: 10px;
  background: #fff;
  border: 2px solid #1f55f0;
  border-bottom-width: 4px;
}
.search b { color: #1f55f0; font: 900 20px/24px "DejaVu Sans", sans-serif; }
.search input { flex: 1; min-width: 0; border: 0; padding: 0; color: #888; font: inherit; background: none; }
.toolbar .more { font-size: 13px; margin-left: 12px; }

.ico { fill: #fff; font-family: "Liberation Sans", "Noto Sans CJK KR", sans-serif; font-weight: 700; }
.slr { font-size: 11px; font-style: italic; }
.p { font-size: 21px; }
.w { font-size: 19px; }
.ga { font-size: 11px; }
.a { font-size: 17px; font-style: italic; }

/* ---------- router page ---------- */
.page { flex: 1; padding: 9px 17px; }
.frame {
  width: 100%;
  max-width: 1311px;
  display: grid;
  grid-template-columns: 326px 1fr;
  gap: 15px 14px;
}
.panel {
  background: #fff;
  border: 2px solid #fafafa;
  border-right-color: #999;
  border-bottom-color: #999;
  box-shadow: 0 0 9px rgba(0, 0, 0, .18), 4px 4px 7px rgba(0, 0, 0, .35);
}

.masthead {
  grid-column: 1 / -1;
  min-height: 95px;
  padding: 15px 22px 2px 14px;
  display: flex;
  justify-content: space-between;
  align-items: flex-end;
  background: #dbdbdb;
}
.brand { align-self: flex-start; }
.brand h1 {
  margin: 11px 0 0;
  display: flex;
  align-items: baseline;
  font: 400 28px/32px "Noto Sans", sans-serif;
  color: #333;
}
.brand b { font: 900 38px/32px "DejaVu Sans", sans-serif; color: #2c2c2c; }
.brand i { font-style: normal; color: #3fa846; }
.model { margin-left: 5px; font: 26px/32px "DejaVu Sans", sans-serif; color: #222; }

.actions { display: flex; gap: 11px; }
.actions button {
  flex-direction: column;
  width: 29px;
  font: 14px/18px "Noto Sans CJK KR", sans-serif;
  color: #555;
}

.bar {
  height: 36px;
  margin: 0;
  padding: 0 0 3px 6px;
  display: flex;
  align-items: center;
  background: #dbdbdb;
  border: 2px solid #ccc;
  font: 500 20px/24px "Noto Sans CJK KR", sans-serif;
}

.sidebar { padding: 3px 2px 6px; display: flex; flex-direction: column; }
.sidebar .bar svg { margin-right: 21px; }

.tree {
  margin: 21px 0 0;
  padding: 0;
  list-style: none;
  font: 300 19px/24px "Liberation Sans", "Noto Sans CJK KR", sans-serif;
}
.tree.advanced { margin-top: 68px; }
.tree li { height: 24px; display: flex; align-items: center; }
.tree li > :first-child { width: 9px; margin-right: 9px; }
.l1 { padding-left: 6px; }
.l1 a { padding-left: 5px; }
.l2 { padding-left: 30px; }
.l2 a { padding-left: 8px; }
.l3 { padding-left: 56px; }
.l3 a { margin-left: 4px; padding-left: 6px; }
.tree .selected { background: #a9bbdc; }

.mobile {
  margin-top: auto;
  display: flex;
  align-items: center;
  gap: 6px;
  color: #555;
}

.content { padding: 3px 3px 3px 1px; }
.content .bar svg { margin-right: 14px; }
.content h3 {
  height: 38px;
  margin: 0;
  padding: 0 0 2px 8px;
  display: flex;
  align-items: center;
  justify-content: space-between;
  background: #e2e2e2;
  border-top: 2px solid #ccc;
  border-bottom: 2px solid #ccc;
  font: 500 20px/24px "Noto Sans CJK KR", sans-serif;
}
.content .status + h3 { height: 37px; }
.reset {
  margin-right: 30px;
  display: flex;
  align-items: center;
  gap: 2px;
  font: 300 19px/24px "Noto Sans CJK KR", sans-serif;
}

table { width: 100%; table-layout: fixed; border-collapse: separate; border-spacing: 0; }
th, td {
  height: 30px;
  padding: 0 0 2px;
  text-align: left;
  font-weight: 400;
  line-height: 24px;
  white-space: nowrap;
}
th { background: #eee; border-bottom: 2px solid #ccc; }
th:first-child, td:first-child { padding-left: 7px; }
tbody tr:nth-child(even) { background: #f7f7f7; }
.ko { font-family: "Noto Sans CJK KR", sans-serif; font-size: 19px; font-weight: 300; }
.c187 { width: 187px; }
.c185 { width: 185px; }
.c173 { width: 173px; }
.c165 { width: 165px; }
.c148 { width: 148px; }
.c147 { width: 147px; }
.c146 { width: 146px; }
.c241 { width: 241px; }

.setup td { height: 36px; }
.setup th:first-child { padding-left: 1px; }

.pick { width: 135px; display: grid; align-items: center; }
.pick > * { grid-area: 1 / 1; }
.pick select {
  appearance: none;
  width: 100%;
  height: 26px;
  padding: 0 0 0 4px;
  border: 2px solid #666;
  border-radius: 0;
  background: #fff;
  color: #000;
  font: 300 19px/20px "Noto Sans CJK KR", sans-serif;
}
.pick > svg { justify-self: end; margin-right: 6px; pointer-events: none; fill: #222; }
.pick.off select {
  height: 29px;
  padding-left: 3px;
  border: 3px solid #666;
  border-right: 2px solid #e0e0e0;
  border-bottom: 2px solid #e0e0e0;
  background: #eee;
  color: #777;
  opacity: 1;
  font: 18px/24px "Liberation Sans", sans-serif;
}
.pick i {
  justify-self: end;
  width: 29px;
  height: 24px;
  margin-right: 3px;
  display: grid;
  place-items: center;
  border: 2px solid #666;
  border-left-color: #aaa;
  border-top-color: #aaa;
  background: #f1f1f1;
  pointer-events: none;
  fill: #666;
}
.apply {
  width: 69px;
  height: 31px;
  border: 2px solid #6d6d6d;
  background: linear-gradient(#eee, #d8d8d8);
  font: 300 19px/24px "Noto Sans CJK KR", sans-serif;
}

.stats { display: grid; grid-template-columns: 1fr 25px; border-bottom: 2px solid #ccc; }
.scroll {
  padding: 14px 1px 0;
  display: flex;
  flex-direction: column;
  background: #f0f0f0;
  fill: #606060;
}
.scroll button { height: 36px; }
.scroll .up { align-items: flex-start; padding-top: 11px; }
.up svg { transform: rotate(180deg); }
.thumb { height: 208px; margin-bottom: 20px; background: #ccc; }
.foot { height: 29px; background: #eee; }

.ink { position: absolute; left: 0; top: 0; pointer-events: none; }
.note { fill: #03a9f4; stroke: #03a9f4; stroke-width: 1px; font: italic 500 56px "Liberation Serif", serif; }
.tall { font-size: 88px; }
.hangul { font: 500 46px "Noto Sans CJK KR", sans-serif; }

/* ---------- taskbar ---------- */
.taskbar {
  height: 60px;
  display: flex;
  justify-content: space-between;
  background: linear-gradient(90deg, #280e14, #2b1013 25%, #3a1712 42%, #32120d 75%, #2c1015 90%, #2c1015);
  color: #fff;
}
.apps, .tray { display: flex; }
.apps button {
  width: 61px;
  margin: 0 7px;
  border-bottom: 3px solid transparent;
}
.apps .sys { width: 72px; margin: 0; }
.apps .sys + button:not(.sys) { margin-left: 11px; }
.apps .open { border-bottom-color: #76b9ed; }
.apps .active { width: 73px; margin: 0 1px; background: #594346; border-right: 4px solid #463234; }

.tray { align-items: center; gap: 26px; }
.tray button { height: 60px; }
.tray .pen { margin-left: 4px; }
.tray .keys { margin: 0 -7px 0 7px; }
.clock {
  margin: 0 2px 0 -10px;
  text-align: center;
  font: 300 18px/28px "Noto Sans CJK KR", sans-serif;
}
.tray .desktop { width: 8px; margin-left: 4px; border-left: 2px solid #7d6c6e; }
```
